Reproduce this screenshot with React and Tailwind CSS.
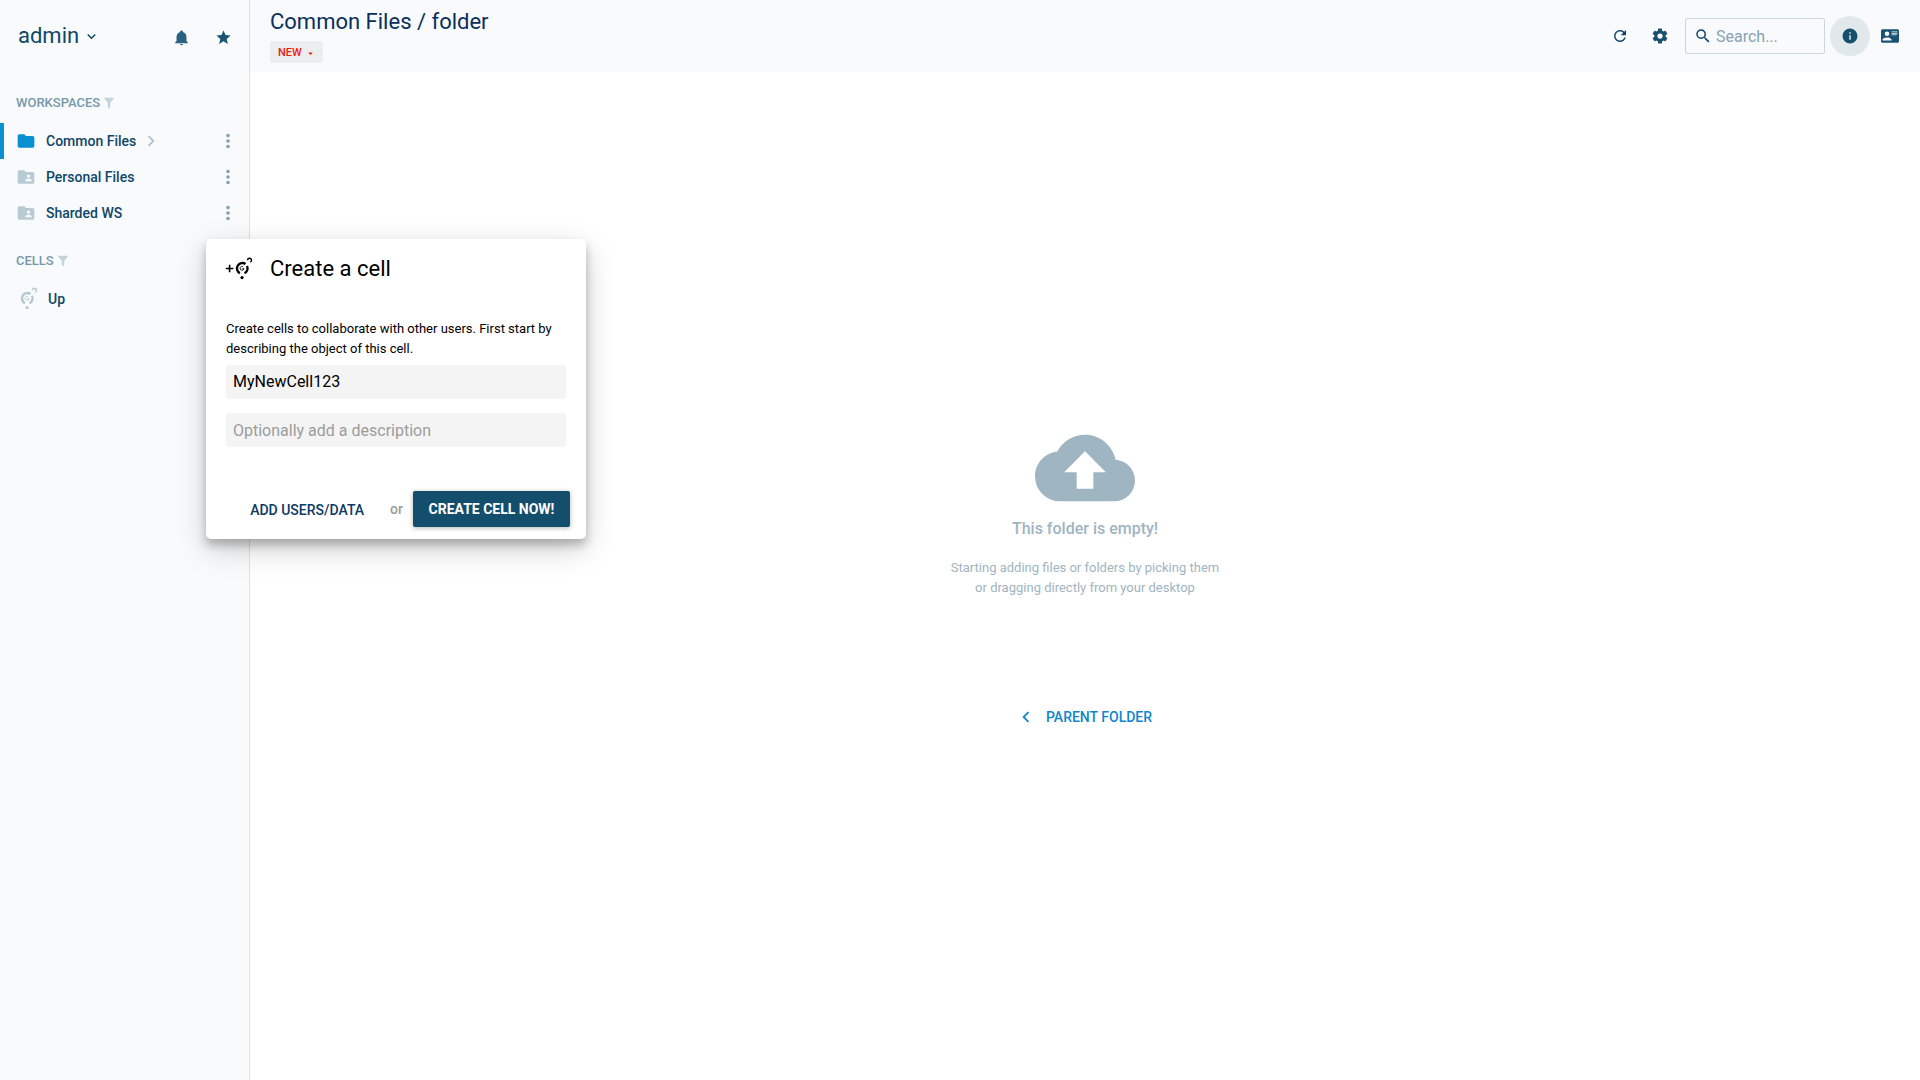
import React from "react";

const P = {
  bell: "M21,19V20H3V19L5,17V11C5,7.9 7.03,5.17 10,4.29C10,4.19 10,4.1 10,4A2,2 0 0,1 12,2A2,2 0 0,1 14,4C14,4.1 14,4.19 14,4.29C16.97,5.17 19,7.9 19,11V17L21,19M14,21A2,2 0 0,1 12,23A2,2 0 0,1 10,21",
  star: "M12,17.27L18.18,21L16.54,13.97L22,9.24L14.81,8.62L12,2L9.19,8.62L2,9.24L7.45,13.97L5.82,21L12,17.27Z",
  down: "M7.41,8.58L12,13.17L16.59,8.58L18,10L12,16L6,10L7.41,8.58Z",
  right: "M8.59,16.58L13.17,12L8.59,7.41L10,6L16,12L10,18L8.59,16.58Z",
  left: "M15.41,16.58L10.83,12L15.41,7.41L14,6L8,12L14,18L15.41,16.58Z",
  caret: "M7,10L12,15L17,10H7Z",
  filter: "M14,12V19.88C14.04,20.18 13.94,20.5 13.71,20.71C13.32,21.1 12.69,21.1 12.3,20.71L10.29,18.7C10.06,18.47 9.96,18.16 10,17.87V12H9.97L4.21,4.62C3.87,4.19 3.95,3.56 4.38,3.22C4.57,3.08 4.78,3 5,3H19C19.22,3 19.43,3.08 19.62,3.22C20.05,3.56 20.13,4.19 19.79,4.62L14.03,12H14Z",
  folder: "M10,4H4C2.89,4 2,4.89 2,6V18A2,2 0 0,0 4,20H20A2,2 0 0,0 22,18V8C22,6.89 21.1,6 20,6H12L10,4Z",
  folderUser: "M19,17H11V16C11,14.67 13.67,14 15,14C16.33,14 19,14.67 19,16M15,9A2,2 0 0,1 17,11A2,2 0 0,1 15,13A2,2 0 0,1 13,11C13,9.89 13.9,9 15,9M20,6H12L10,4H4C2.89,4 2,4.89 2,6V18A2,2 0 0,0 4,20H20A2,2 0 0,0 22,18V8C22,6.89 21.1,6 20,6Z",
  dots: "M12,16A2,2 0 0,1 14,18A2,2 0 0,1 12,20A2,2 0 0,1 10,18A2,2 0 0,1 12,16M12,10A2,2 0 0,1 14,12A2,2 0 0,1 12,14A2,2 0 0,1 10,12A2,2 0 0,1 12,10M12,4A2,2 0 0,1 14,6A2,2 0 0,1 12,8A2,2 0 0,1 10,6A2,2 0 0,1 12,4Z",
  refresh: "M17.65,6.35C16.2,4.9 14.21,4 12,4A8,8 0 0,0 4,12A8,8 0 0,0 12,20C15.73,20 18.84,17.45 19.73,14H17.65C16.83,16.33 14.61,18 12,18A6,6 0 0,1 6,12A6,6 0 0,1 12,6C13.66,6 15.14,6.69 16.22,7.78L13,11H20V4L17.65,6.35Z",
  gear: "M12,15.5A3.5,3.5 0 0,1 8.5,12A3.5,3.5 0 0,1 12,8.5A3.5,3.5 0 0,1 15.5,12A3.5,3.5 0 0,1 12,15.5M19.43,12.97C19.47,12.65 19.5,12.33 19.5,12C19.5,11.67 19.47,11.34 19.43,11L21.54,9.37C21.73,9.22 21.78,8.95 21.66,8.73L19.66,5.27C19.54,5.05 19.27,4.96 19.05,5.05L16.56,6.05C16.04,5.66 15.5,5.32 14.87,5.07L14.5,2.42C14.46,2.18 14.25,2 14,2H10C9.75,2 9.54,2.18 9.5,2.42L9.13,5.07C8.5,5.32 7.96,5.66 7.44,6.05L4.95,5.05C4.73,4.96 4.46,5.05 4.34,5.27L2.34,8.73C2.21,8.95 2.27,9.22 2.46,9.37L4.57,11C4.53,11.34 4.5,11.67 4.5,12C4.5,12.33 4.53,12.65 4.57,12.97L2.46,14.63C2.27,14.78 2.21,15.05 2.34,15.27L4.34,18.73C4.46,18.95 4.73,19.03 4.95,18.95L7.44,17.94C7.96,18.34 8.5,18.68 9.13,18.93L9.5,21.58C9.54,21.82 9.75,22 10,22H14C14.25,22 14.46,21.82 14.5,21.58L14.87,18.93C15.5,18.67 16.04,18.34 16.56,17.94L19.05,18.95C19.27,19.03 19.54,18.95 19.66,18.73L21.66,15.27C21.78,15.05 21.73,14.78 21.54,14.63L19.43,12.97Z",
  search: "M9.5,3A6.5,6.5 0 0,1 16,9.5C16,11.11 15.41,12.59 14.44,13.73L14.71,14H15.5L20.5,19L19,20.5L14,15.5V14.71L13.73,14.44C12.59,15.41 11.11,16 9.5,16A6.5,6.5 0 0,1 3,9.5A6.5,6.5 0 0,1 9.5,3M9.5,5C7,5 5,7 5,9.5C5,12 7,14 9.5,14C12,14 14,12 14,9.5C14,7 12,5 9.5,5Z",
  info: "M13,9H11V7H13M13,17H11V11H13M12,2A10,10 0 0,0 2,12A10,10 0 0,0 12,22A10,10 0 0,0 22,12A10,10 0 0,0 12,2Z",
  card: "M2,3H22C23.05,3 24,3.95 24,5V19C24,20.05 23.05,21 22,21H2C0.95,21 0,20.05 0,19V5C0,3.95 0.95,3 2,3M14,6V7H22V6H14M14,8V9H21.5L22,9V8H14M14,10V11H21V10H14M8,13.91C6,13.91 2,15 2,17V18H14V17C14,15 10,13.91 8,13.91M8,6A3,3 0 0,0 5,9A3,3 0 0,0 8,12A3,3 0 0,0 11,9A3,3 0 0,0 8,6Z",
  cloud: "M14,13V17H10V13H7L12,8L17,13M19.35,10.03C18.67,6.59 15.64,4 12,4C9.11,4 6.6,5.64 5.35,8.04C2.34,8.36 0,10.9 0,14A6,6 0 0,0 6,20H19A5,5 0 0,0 24,15C24,12.36 21.95,10.22 19.35,10.03Z",
};

function Icon({ name, size = 18, className = "" }) {
  return (
    <svg width={size} height={size} viewBox="0 0 24 24" className={"shrink-0 " + className}>
      <path d={P[name]} fill="currentColor" fillRule="evenodd" />
    </svg>
  );
}

function CellIcon({ plus, className = "" }) {
  return (
    <svg width="28" height="24" viewBox="0 0 28 24" className={"shrink-0 " + className} fill="none" stroke="currentColor">
      {plus && <path d="M0.8 11.5H8.4M4.6 7.7V15.3" strokeWidth="1.6" />}
      <path d="M14.9 16.2A5.4 5.4 0 1 1 20.5 7" strokeWidth="2.3" />
      <path d="M22 8.9A5.4 5.4 0 0 1 19.5 16.2" strokeWidth="2.3" />
      <path d="M18 9.7A1.9 1.9 0 1 0 18.9 11.6H17.4" strokeWidth="0.9" />
      <path d="M22.5 3.2A2 2 0 1 1 25.3 5.1" strokeWidth="1.4" />
      <circle cx="17" cy="20.6" r="1.6" fill="currentColor" stroke="none" />
    </svg>
  );
}

function Workspace({ icon, label, active }) {
  return (
    <div className={"flex h-9 items-center border-l-4 pr-[10px] pl-3 " + (active ? "border-[#0a8fd0]" : "border-transparent")}>
      <Icon name={icon} size={20} className={active ? "text-[#0a8fd0]" : "text-[#b8cbd3]"} />
      <span className="ml-[10px] text-[14px] font-medium whitespace-nowrap">{label}</span>
      {active && <Icon name="right" size={22} className="ml-1 text-[#b0c4ce]" />}
      <Icon name="dots" size={22} className="ml-auto text-[#82a1b1]" />
    </div>
  );
}

function SectionTitle({ children }) {
  return (
    <div className="flex h-5 items-center pl-4 text-[13px] font-medium text-[#7698a9]">
      <span>{children}</span>
      <Icon name="filter" size={14} className="ml-[2px] text-[#c3d3da]" />
    </div>
  );
}

export default function App() {
  return (
    <div className="relative flex h-[1080px] w-[1920px] overflow-hidden bg-white font-['Roboto',sans-serif] text-[#0f4768]">
      <aside className="flex w-[250px] shrink-0 flex-col border-r border-[#dce2e6] bg-[#f8fafc]">
        <div className="flex h-[71px] items-center pl-[18px]">
          <span className="text-[22px]">admin</span>
          <Icon name="down" size={17} className="mt-px ml-1" />
          <Icon name="bell" size={17} className="mt-[3px] ml-auto text-[#2a6280]" />
          <Icon name="star" size={17} className="mt-[3px] mr-[17px] ml-[25px] text-[#1a5674]" />
        </div>
        <div className="mt-[22px]"><SectionTitle>WORKSPACES</SectionTitle></div>
        <div className="mt-[10px] flex flex-col">
          <Workspace icon="folder" label="Common Files" active />
          <Workspace icon="folderUser" label="Personal Files" />
          <Workspace icon="folderUser" label="Sharded WS" />
        </div>
        <div className="mt-5"><SectionTitle>CELLS</SectionTitle></div>
        <div className="mt-[10px] flex h-9 items-center pl-[10px]">
          <CellIcon className="text-[#b4c8d1]" />
          <span className="ml-[10px] text-[14px] font-medium">Up</span>
        </div>
      </aside>

      <main className="flex grow flex-col">
        <header className="flex h-[72px] shrink-0 items-center bg-[#f8fafc] pl-5">
          <div className="flex h-full flex-col items-start">
            <h1 className="mt-[9px] text-[22px] leading-[26px] text-[#0b2f5c]">Common Files / folder</h1>
            <div className="mt-[6px] flex h-[22px] w-[53px] items-center rounded-[2px] bg-[#ebedee] pt-[3px] pl-2 text-[11px] font-medium text-[#f0190c]">
              <span>NEW</span>
              <Icon name="caret" size={11} className="ml-[3px] -mt-px" />
            </div>
          </div>
          <div className="ml-auto flex items-center">
            <Icon name="refresh" />
            <Icon name="gear" className="ml-[22px] text-[#174f6e]" />
            <div className="ml-4 flex h-9 w-[140px] items-center rounded-[2px] border border-[#c9d7de] pl-2">
              <Icon name="search" />
              <span className="mt-[2px] ml-1 text-[16px] text-[#86a3b2]">Search...</span>
            </div>
            <div className="ml-[5px] flex size-10 items-center justify-center rounded-full bg-[#e1e8eb]">
              <Icon name="info" className="text-[#174f6e]" />
            </div>
            <Icon name="card" className="mr-[21px] ml-[11px] text-[#1a5372]" />
          </div>
        </header>

        <section className="flex flex-col items-center text-[#9fb5c2]">
          <Icon name="cloud" size={100} className="mt-[346px]" />
          <p className="mt-px text-[16px] leading-5 font-medium">This folder is empty!</p>
          <p className="mt-[19px] text-center text-[13px] leading-5">
            Starting adding files or folders by picking them
            <br />
            or dragging directly from your desktop
          </p>
          <div className="mt-[109px] mr-[3px] flex h-5 items-center text-[14px] font-medium text-[#0f86cc]">
            <Icon name="left" size={22} />
            <span className="ml-[9px]">PARENT FOLDER</span>
          </div>
        </section>
      </main>

      <div className="absolute top-[239px] left-[206px] flex h-[300px] w-[380px] flex-col rounded-[5px] bg-white px-5 text-black shadow-[0_10px_30px_rgba(0,0,0,0.19),0_6px_10px_rgba(0,0,0,0.23)]">
        <div className="mt-4 flex h-7 items-center">
          <CellIcon plus className="-ml-px" />
          <h2 className="ml-[17px] text-[22px] leading-7">Create a cell</h2>
        </div>
        <p className="mt-9 text-[13px] leading-5 whitespace-nowrap">
          Create cells to collaborate with other users. First start by
          <br />
          describing the object of this cell.
        </p>
        <div className="mt-[6px] flex h-[34px] shrink-0 items-center rounded-[3px] bg-[#f4f4f4] px-[7px] text-[16px]">MyNewCell123</div>
        <div className="mt-[14px] flex h-[34px] shrink-0 items-center rounded-[3px] bg-[#f4f4f4] px-[7px] pt-[2px] text-[16px] text-[#9c9c9c]">Optionally add a description</div>
        <div className="mt-[44px] -mr-1 flex h-9 items-center justify-end">
          <span className="pt-[2px] text-[14px] font-medium text-[#0c3a62]">ADD USERS/DATA</span>
          <span className="ml-[26px] text-[14px] font-medium text-[#9b9b9b]">or</span>
          <div className="ml-[10px] flex h-9 w-[157px] items-center justify-center rounded-[2px] bg-[#134e6c] text-[14px] font-bold text-white shadow-[0_1px_5px_rgba(0,0,0,0.3)]">CREATE CELL NOW!</div>
        </div>
      </div>
    </div>
  );
}
